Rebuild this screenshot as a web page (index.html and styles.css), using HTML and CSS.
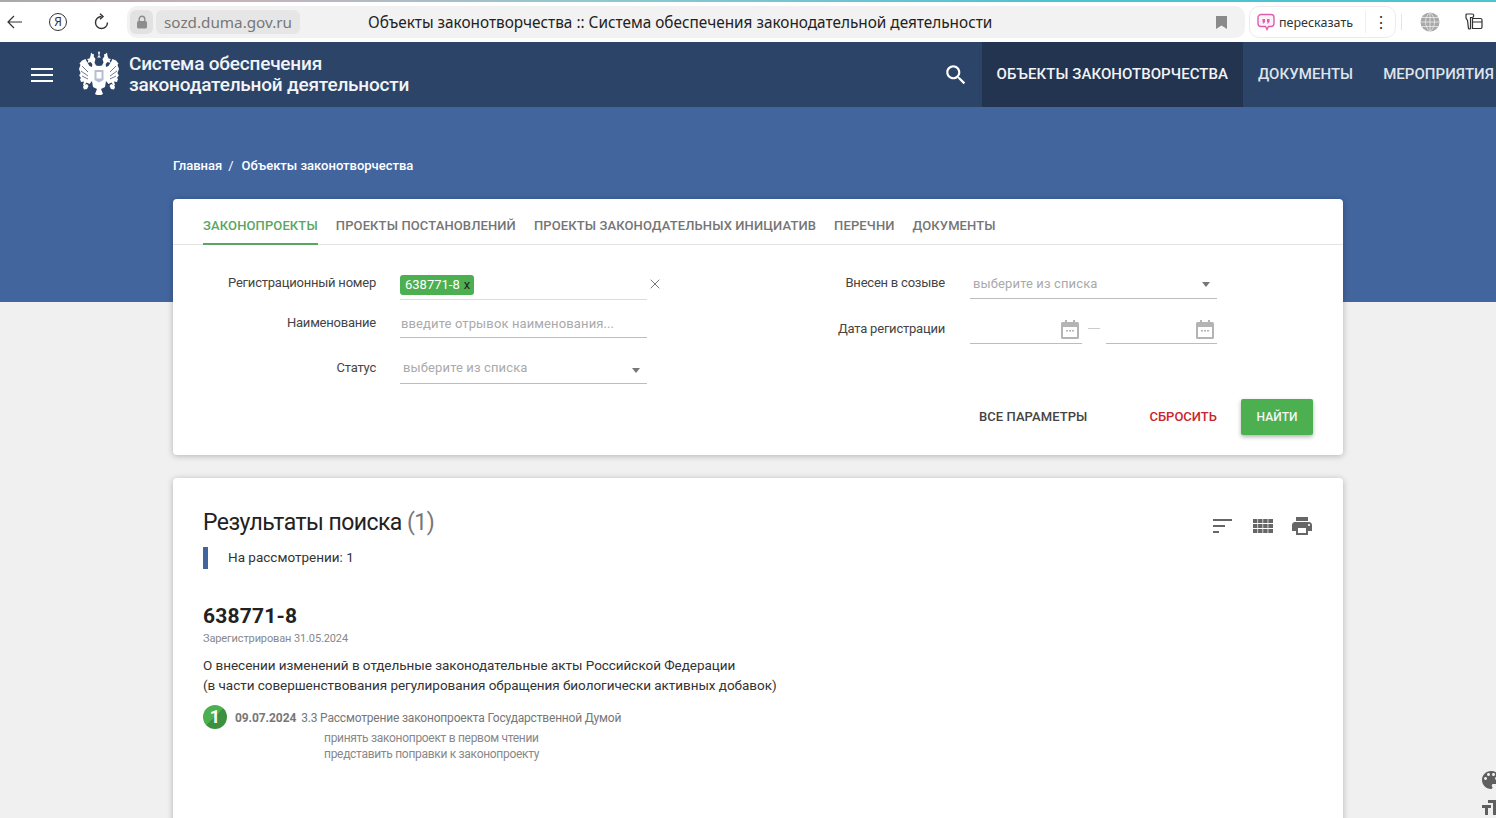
FILE: index.html
```html
<!DOCTYPE html>
<html lang="ru">
<head>
    <meta charset="utf-8">
    <title>Объекты законотворчества :: Система обеспечения законодательной деятельности</title>
    <link rel="stylesheet" href="styles.css">
</head>
<body>

<!-- browser toolbar -->
<div class="chrome">
    <div class="chrome-line"></div>
    <div class="chrome-row">
        <svg class="chrome-back" width="16" height="14" viewBox="0 0 16 14"><path d="M7 1 1 7l6 6M1 7h14" fill="none" stroke="#333" stroke-width="1.2"/></svg>
        <span class="ya-round">Я</span>
        <svg class="chrome-reload" width="18" height="18" viewBox="0 0 18 18"><path d="M9.5 3.500a6 6 0 1 0 6 6" fill="none" stroke="#333" stroke-width="1.4"/><path d="M8 .8l3 2.700-3 2.700" fill="none" stroke="#333" stroke-width="1.4"/></svg>
        <div class="address">
            <span class="lock-box">
                <svg width="12" height="14" viewBox="0 0 12 14"><rect x="1" y="6" width="10" height="7.5" rx="1.5" fill="#8d8d8d"/><path d="M3.200 6V4a2.800 2.800 0 0 1 5.600 0v2" fill="none" stroke="#8d8d8d" stroke-width="1.4"/></svg>
            </span>
            <span class="domain">sozd.duma.gov.ru</span>
            <span class="page-title">Объекты законотворчества :: Система обеспечения законодательной деятельности</span>
            <svg class="bookmark" width="11" height="13" viewBox="0 0 11 13"><path d="M0 0h11v13L5.500 9.500 0 13z" fill="#8a8a8a"/></svg>
        </div>
        <div class="retell">
            <svg width="18" height="18" viewBox="0 0 18 18"><path d="M4 1.500h10a3 3 0 0 1 3 3v6a3 3 0 0 1-3 3h-2.500l-1.500 3-1.500-3H4a3 3 0 0 1-3-3v-6a3 3 0 0 1 3-3z" fill="#fdf1f8" stroke="#e05cae" stroke-width="1.400"/><path d="M5.500 6h2.500v3l-1.500 1.500H5.500L6.300 9H5.500zM10 6h2.500v3L11 10.500h-1l.8-1.500H10z" fill="#e05cae"/></svg>
            <span class="retell-text">пересказать</span>
            <span class="retell-dots">⋮</span>
        </div>
        <span class="chrome-sep"></span>
        <svg class="globe" width="20" height="20" viewBox="0 0 20 20"><circle cx="10" cy="10" r="9.500" fill="#a8a8a8"/><path d="M.5 10h19M10 .5v19M2 5.500h16M2 14.500h16M10 .5c-6 5-6 14 0 19M10 .5c6 5 6 14 0 19" fill="none" stroke="#eee" stroke-width=".8"/></svg>
        <svg class="ext" width="18" height="18" viewBox="0 0 18 18"><path d="M2 1h5a1.500 1.500 0 0 1 0 3.500H5.500v11a1.500 1.500 0 0 1-2 0L2.500 7.500 1 5V2a1 1 0 0 1 1-1zM7.500 5.500h8a1.500 1.500 0 0 1 1.500 1.500v7a1.500 1.500 0 0 1-1.500 1.500h-8zM7.500 9h9.500" fill="none" stroke="#333" stroke-width="1.200"/></svg>
    </div>
</div>

<!-- site header -->
<header class="navbar">
    <div class="burger"><span></span><span></span><span></span></div>
    <svg class="emblem" width="40" height="44" viewBox="0 0 40 44">
        <defs>
            <g id="eagle-half">
                <path d="M20 0l1.200 2-.7.8v2.200l1.500 1.500h-2z"/>
                <path d="M12 1.500l1.500 1.500 1.500.2-.3 2.300 1.800 2.500-1 3.500 1.500 3 3 .5V44h-2l-2-1 2-5-4-2-1-6-2.500 3-3-1.500-2 3-1.500-.5 1-3.500-3 .5-1-3L2 27 .2 24.500 1.500 22 0 18l1.500-4-1-1.500L3 9.500l3.500-1.500L8 11l2.500 4 2.500 1 .3-3-1.800-2-3 1 .8-2.500-1.300-1.500 2.500-.5 1-2.500z"/>
                <path d="M5 34l3-1 1.500 2-1.500 3-3 .5-1-2.500z"/>
            </g>
        </defs>
        <g fill="#fff">
            <use href="#eagle-half"/>
            <use href="#eagle-half" transform="matrix(-1 0 0 1 40 0)"/>
        </g>
        <path d="M3 15l6 6M2 20l7 5M3 25l6 3" stroke="#2c4468" stroke-width=".7" fill="none"/>
        <path d="M37 15l-6 6M38 20l-7 5M37 25l-6 3" stroke="#2c4468" stroke-width=".7" fill="none"/>
        <path d="M15.500 19h9v10l-4.500 2.500-4.500-2.500z" fill="#b4bfd0"/>
        <path d="M17.500 21h5v6.500h-5z" fill="#fff"/>
    </svg>
    <div class="site-name">Система обеспечения<br>законодательной деятельности</div>
    <svg class="nav-search" width="26" height="26" viewBox="0 0 24 24"><path d="M15.500 14h-.79l-.28-.27C15.410 12.590 16 11.110 16 9.500 16 5.910 13.090 3 9.500 3S3 5.910 3 9.500 5.910 16 9.500 16c1.610 0 3.090-.59 4.230-1.570l.27.28v.79l5 4.990L20.490 19l-4.990-5zm-6 0C7.010 14 5 11.990 5 9.500S7.010 5 9.500 5 14 7.010 14 9.500 11.990 14 9.500 14z" fill="#fff"/></svg>
    <nav class="nav-items">
        <a class="nav-item active">Объекты законотворчества</a>
        <a class="nav-item">Документы</a>
        <a class="nav-item">Мероприятия</a>
    </nav>
</header>

<main class="content">
    <div class="breadcrumbs">
        <span>Главная</span><span class="crumb-sep">/</span><span>Объекты законотворчества</span>
    </div>

    <section class="card filter-card">
        <div class="tabs">
            <a class="tab active">Законопроекты</a>
            <a class="tab">Проекты постановлений</a>
            <a class="tab">Проекты законодательных инициатив</a>
            <a class="tab">Перечни</a>
            <a class="tab">Документы</a>
        </div>

        <div class="filter-form">
            <div class="form-col left-col">
                <div class="form-row row-number">
                    <label class="form-label">Регистрационный номер</label>
                    <div class="field field-light">
                        <span class="tag">638771-8<span class="tag-x">x</span></span>
                        <svg class="clear-x" width="10" height="10" viewBox="0 0 10 10"><path d="M.7.7l8.600 8.600M9.300.7 .7 9.300" stroke="#777" stroke-width="1"/></svg>
                    </div>
                </div>
                <div class="form-row row-name">
                    <label class="form-label">Наименование</label>
                    <div class="field"><span class="placeholder">введите отрывок наименования...</span></div>
                </div>
                <div class="form-row row-status">
                    <label class="form-label">Статус</label>
                    <div class="field field-select"><span class="placeholder">выберите из списка</span><span class="caret"></span></div>
                </div>
            </div>

            <div class="form-col right-col">
                <div class="form-row row-convocation">
                    <label class="form-label">Внесен в созыве</label>
                    <div class="field field-select"><span class="placeholder">выберите из списка</span><span class="caret"></span></div>
                </div>
                <div class="form-row row-date">
                    <label class="form-label">Дата регистрации</label>
                    <div class="date-range">
                        <div class="field date-field date-from">
                            <svg class="cal" width="18" height="19" viewBox="0 0 18 19"><path d="M4 0h2v2h6V0h2v2h2.500A1.500 1.500 0 0 1 18 3.500v14a1.500 1.500 0 0 1-1.500 1.500h-15A1.500 1.500 0 0 1 0 17.500v-14A1.500 1.500 0 0 1 1.500 2H4zM2 7v10h14V7z" fill="#b4b4b4"/><path d="M5 10h2v1.500H5zM8 10h2v1.500H8zM11 10h2v1.500h-2z" fill="#b4b4b4"/></svg>
                        </div>
                        <span class="date-dash"></span>
                        <div class="field date-field date-to">
                            <svg class="cal" width="18" height="19" viewBox="0 0 18 19"><path d="M4 0h2v2h6V0h2v2h2.500A1.500 1.500 0 0 1 18 3.500v14a1.500 1.500 0 0 1-1.500 1.500h-15A1.500 1.500 0 0 1 0 17.500v-14A1.500 1.500 0 0 1 1.500 2H4zM2 7v10h14V7z" fill="#b4b4b4"/><path d="M5 10h2v1.500H5zM8 10h2v1.500H8zM11 10h2v1.500h-2z" fill="#b4b4b4"/></svg>
                        </div>
                    </div>
                </div>
            </div>
        </div>

        <div class="form-actions">
            <button class="btn-flat">Все параметры</button>
            <button class="btn-flat btn-reset">Сбросить</button>
            <button class="btn-find">Найти</button>
        </div>
    </section>

    <section class="card results-card">
        <div class="results-head">
            <h2 class="results-title">Результаты поиска <span class="results-count">(1)</span></h2>
            <div class="results-tools">
                <svg width="24" height="24" viewBox="0 0 24 24"><path d="M2 5h19v2H2zM2 11h12v2H2zM2 17h6v2H2z" fill="#666"/></svg>
                <svg class="tool-grid" width="20" height="14" viewBox="0 0 20 14"><path d="M0 0h4.400v4H0zM5.100 0h4.400v4H5.100zM10.200 0h4.400v4h-4.400zM15.300 0H20v4h-4.700zM0 5h4.400v4H0zM5.100 5h4.400v4H5.100zM10.200 5h4.400v4h-4.400zM15.300 5H20v4h-4.700zM0 10h4.400v4H0zM5.100 10h4.400v4H5.100zM10.200 10h4.400v4h-4.400zM15.300 10H20v4h-4.700z" fill="#666"/></svg>
                <svg width="24" height="24" viewBox="0 0 24 24"><path d="M19 8H5c-1.660 0-3 1.340-3 3v6h4v4h12v-4h4v-6c0-1.660-1.340-3-3-3zm-3 11H8v-5h8v5zm3-7c-.55 0-1-.45-1-1s.45-1 1-1 1 .45 1 1-.45 1-1 1zm-1-9H6v4h12V3z" fill="#666"/></svg>
            </div>
        </div>
        <div class="status-line">На рассмотрении: 1</div>

        <article class="bill">
            <div class="bill-number">638771-8</div>
            <div class="bill-date">Зарегистрирован 31.05.2024</div>
            <p class="bill-name">О внесении изменений в отдельные законодательные акты Российской Федерации<br>(в части совершенствования регулирования обращения биологически активных добавок)</p>
            <div class="bill-event">
                <span class="event-badge">1</span>
                <span class="event-date">09.07.2024</span>
                <span class="event-text">3.3 Рассмотрение законопроекта Государственной Думой</span>
            </div>
            <div class="event-notes">принять законопроект в первом чтении<br>представить поправки к законопроекту</div>
        </article>
    </section>
</main>

<!-- floating display tools, clipped by the window edge -->
<div class="side-tools">
    <svg width="24" height="24" viewBox="0 0 24 24"><path d="M12 3c-4.970 0-9 4.030-9 9s4.030 9 9 9c.83 0 1.500-.67 1.500-1.500 0-.39-.15-.74-.39-1.010-.23-.26-.38-.61-.38-.99 0-.83.67-1.500 1.500-1.500H16c2.760 0 5-2.240 5-5 0-4.420-4.030-8-9-8zm-5.500 9c-.83 0-1.500-.67-1.500-1.500S5.670 9 6.500 9 8 9.670 8 10.500 7.330 12 6.500 12zm3-4C8.670 8 8 7.330 8 6.500S8.670 5 9.500 5s1.500.67 1.500 1.500S10.330 8 9.500 8zm5 0c-.83 0-1.500-.67-1.500-1.500S13.670 5 14.500 5s1.500.67 1.500 1.500S15.330 8 14.500 8zm3 4c-.83 0-1.500-.67-1.500-1.500S16.670 9 17.500 9s1.500.67 1.500 1.500-.67 1.500-1.500 1.500z" fill="#5f5f5f"/></svg>
    <svg width="24" height="24" viewBox="0 0 24 24"><path d="M9 4v3h5v12h3V7h5V4H9zm-6 8h3v7h3v-7h3V9H3v3z" fill="#5f5f5f"/></svg>
</div>

</body>
</html>
```

FILE: styles.css
```css
html, body {
    margin: 0;
    padding: 0;
    height: 818px;
    overflow: hidden;
}
body {
    font-family: Roboto, "Liberation Sans", sans-serif;
    background-color: #f0f0f0;
    color: #333;
    position: relative;
}

/* browser toolbar */
.chrome {
    height: 42px;
    background: #fff;
}
.chrome-line {
    height: 2px;
    background: linear-gradient(90deg, #a9a9a9 0, #c9b2bb 15%, #8fc8d2 40%, #4fc2cf 70%, #4fc2cf 100%);
}
.chrome-row {
    height: 40px;
    display: flex;
    align-items: center;
}
.chrome-back {
    margin-left: 7px;
}
.ya-round {
    width: 16px;
    height: 16px;
    margin-left: 26px;
    border: 1.2px solid #333;
    border-radius: 50%;
    font: 12px/16px "Noto Sans", sans-serif;
    text-align: center;
    color: #333;
}
.chrome-reload {
    margin-left: 25px;
}
.address {
    width: 1118px;
    height: 32px;
    margin-left: 17px;
    display: flex;
    align-items: center;
    background: #f2f2f2;
    border-radius: 10px;
}
.lock-box {
    width: 23px;
    height: 24px;
    margin-left: 3px;
    display: flex;
    align-items: center;
    justify-content: center;
    background: #e2e2e2;
    border-radius: 6px;
}
.domain {
    margin-left: 3px;
    padding: 0 8px;
    height: 24px;
    background: #e6e6e6;
    border-radius: 6px;
    font: 15.250px/24px "Noto Sans", sans-serif;
    color: #777;
}
.page-title {
    margin-left: 68px;
    font: 15.350px "Noto Sans", sans-serif;
    color: #222;
    white-space: nowrap;
}
.bookmark {
    margin-left: auto;
    margin-right: 18px;
}
.retell {
    width: 145px;
    height: 30px;
    margin-left: 4px;
    display: flex;
    align-items: center;
    border: 1px solid #ececec;
    border-radius: 10px;
}
.retell svg {
    margin-left: 7px;
}
.retell-text {
    margin-left: 4px;
    font: 12.500px "Noto Sans", sans-serif;
    color: #333;
}
.retell-dots {
    margin-left: 12px;
    padding-left: 7px;
    border-left: 1px solid #eee;
    font: 16px "Noto Sans", sans-serif;
    color: #333;
}
.chrome-sep {
    width: 1px;
    height: 16px;
    margin-left: 5px;
    background: #e4e4e4;
}
.globe {
    margin-left: 18px;
}
.ext {
    margin-left: 25px;
}

/* site header */
.navbar {
    height: 65px;
    display: flex;
    align-items: center;
    background: #2c4468;
    color: #fff;
    white-space: nowrap;
}
.burger {
    width: 22px;
    margin-left: 31px;
    display: flex;
    flex-direction: column;
    gap: 4px;
}
.burger span {
    height: 2px;
    background: #fff;
}
.emblem {
    margin-left: 26px;
    margin-top: -3px;
}
.site-name {
    margin-left: 10px;
    margin-bottom: 2px;
    font-size: 19px;
    font-weight: 500;
    line-height: 21px;
    letter-spacing: -.2px;
    color: #f2f4f7;
}
.nav-search {
    margin-left: auto;
}
.nav-items {
    height: 65px;
    margin-left: 13px;
    margin-right: -13px;
    display: flex;
}
.nav-item {
    display: flex;
    align-items: center;
    padding: 0 15px 2px;
    font-size: 15px;
    font-weight: 500;
    letter-spacing: .05px;
    text-transform: uppercase;
    color: #dfe4ec;
}
.nav-item.active {
    background: #233450;
    color: #f2f4f7;
}

/* page body with the blue band behind the top of the filter */
.content {
    height: 711px;
    overflow: hidden;
    padding: 0 153px 0 173px;
    background: linear-gradient(#42659e 0, #42659e 195px, #f0f0f0 195px);
}
.breadcrumbs {
    height: 92px;
    box-sizing: border-box;
    padding-top: 51px;
    font-size: 13px;
    font-weight: 500;
    line-height: 16px;
    color: #fff;
}
.crumb-sep {
    margin: 0 8px 0 6px;
    font-weight: 400;
}
.card {
    background: #fff;
    border-radius: 4px;
    box-shadow: 0 1px 6px rgba(0,0,0,0.25);
}

/* filter card */
.filter-card {
    height: 256px;
}
.tabs {
    height: 46px;
    box-sizing: border-box;
    padding: 0 30px;
    display: flex;
    gap: 18px;
    border-bottom: 1px solid #e4e4e4;
}
.tab {
    height: 46px;
    box-sizing: border-box;
    padding-top: 19px;
    font-size: 13px;
    font-weight: 500;
    line-height: 16px;
    letter-spacing: .12px;
    text-transform: uppercase;
    color: #757575;
}
.tab.active {
    color: #5aa661;
    border-bottom: 2px solid #5aa661;
}
.filter-form {
    display: flex;
    height: 154px;
}
.form-col {
    display: flex;
    flex-direction: column;
}
.left-col {
    width: 474px;
}
.right-col {
    margin-left: 144px;
}
.form-row {
    flex: none;
    display: flex;
    gap: 24px;
}
.left-col .form-label {
    width: 203px;
}
.right-col .form-row {
    gap: 25px;
}
.right-col .form-label {
    width: 154px;
}
.form-label {
    padding-top: 1px;
    font-size: 13px;
    line-height: 16px;
    letter-spacing: -.22px;
    text-align: right;
    color: #444;
}
.field {
    position: relative;
    width: 247px;
    box-sizing: border-box;
    border-bottom: 1px solid #bdbdbd;
}
.field-light {
    border-bottom-color: #dcdcdc;
}
.placeholder {
    display: block;
    padding-top: 1px;
    font-size: 13px;
    line-height: 16px;
    letter-spacing: .12px;
    color: #aaa;
}
.row-number {
    margin-top: 30px;
    height: 25px;
}
.row-number .form-label {
    margin-top: -1px;
}
.row-name {
    margin-top: 14px;
    height: 24px;
}
.row-status {
    margin-top: 21px;
    height: 25px;
}
.row-name .field {
    padding-top: 1px;
    padding-left: 1px;
}
.row-status .field {
    padding-left: 3px;
}
.tag {
    display: inline-block;
    height: 20px;
    padding: 0 4px 0 5px;
    border-radius: 3px;
    background: #4caf50;
    font-size: 13px;
    line-height: 20px;
    color: #fff;
    vertical-align: top;
}
.tag-x {
    margin-left: 4px;
    color: #222;
}
.clear-x {
    position: absolute;
    right: -13px;
    top: 4px;
}
.caret {
    position: absolute;
    right: 7px;
    top: 9px;
    border-left: 4px solid transparent;
    border-right: 4px solid transparent;
    border-top: 5px solid #777;
}
.row-convocation {
    margin-top: 29px;
    height: 25px;
}
.right-col .field-select {
    padding-left: 3px;
    padding-top: 1px;
}
.right-col .field-select .caret {
    top: 8px;
}
.row-date {
    margin-top: 20px;
    height: 25px;
}
.row-date .form-label {
    padding-top: 2px;
}
.date-range {
    width: 247px;
    display: flex;
    align-items: stretch;
}
.date-from {
    width: 112px;
}
.date-to {
    width: 111px;
}
.date-dash {
    width: 12px;
    height: 1px;
    margin: 9px 6px 0;
    background: #ccc;
}
.cal {
    position: absolute;
    right: 3px;
    top: 1px;
}
.form-actions {
    height: 36px;
    padding-right: 30px;
    display: flex;
    justify-content: flex-end;
    align-items: center;
}
.form-actions button {
    font-family: inherit;
    font-size: 13px;
    font-weight: 500;
    text-transform: uppercase;
    border: none;
    cursor: pointer;
}
.btn-flat {
    margin-bottom: 2px;
    padding: 0;
    background: none;
    letter-spacing: .08px;
    color: #444;
}
.btn-reset {
    margin-left: 62px;
    letter-spacing: 0;
    color: #c9252d;
}
.form-actions .btn-find {
    width: 72px;
    height: 36px;
    margin-left: 24px;
    padding: 0;
    border-radius: 2px;
    background: #4caf50;
    font-size: 12px;
    color: #f4f8f4;
    box-shadow: 0 2px 4px rgba(0,0,0,0.3);
}

/* search results */
.results-card {
    margin-top: 23px;
    height: 400px;
    padding: 30px 30px 0;
}
.results-head {
    display: flex;
    justify-content: space-between;
}
.results-title {
    margin: 0;
    padding-top: 1px;
    font-size: 23px;
    font-weight: 400;
    line-height: 28px;
    letter-spacing: -.55px;
    color: #222;
}
.results-count {
    color: #777;
}
.results-tools {
    margin-top: 6px;
    margin-right: -1px;
    display: flex;
    align-items: center;
    gap: 18px;
}
.tool-grid {
    margin-right: -1px;
}
.status-line {
    height: 22px;
    margin-top: 9px;
    padding-left: 20px;
    border-left: 5px solid #42659e;
    font-size: 13.500px;
    line-height: 20px;
    color: #333;
}
.bill {
    margin-top: 33px;
}
.bill-number {
    font-size: 21px;
    font-weight: 700;
    line-height: 28px;
    letter-spacing: .2px;
    color: #222;
}
.bill-date {
    margin-top: 2px;
    font-size: 11px;
    line-height: 14px;
    letter-spacing: -.12px;
    color: #888;
}
.bill-name {
    margin: 9px 0 0;
    font-size: 13.500px;
    line-height: 20px;
    letter-spacing: -.04px;
    color: #333;
}
.bill-event {
    height: 24px;
    margin-top: 10px;
    display: flex;
    align-items: center;
    font-size: 12px;
    line-height: 24px;
    color: #777;
}
.event-badge {
    width: 24px;
    height: 24px;
    border-radius: 50%;
    background: linear-gradient(135deg, #4caf50 50%, #3b9140 50%);
    color: #fff;
    font-size: 18px;
    font-weight: 700;
    line-height: 24px;
    text-align: center;
}
.event-date {
    margin-left: 8px;
    padding-top: 2px;
    font-weight: 700;
    letter-spacing: -.08px;
}
.event-text {
    margin-left: 5px;
    padding-top: 2px;
    letter-spacing: -.19px;
}
.event-notes {
    margin: 1px 0 0 121px;
    font-size: 12px;
    line-height: 16px;
    letter-spacing: -.3px;
    color: #888;
}

/* floating tools over the right edge */
.side-tools {
    position: absolute;
    left: 1479px;
    top: 768px;
    display: flex;
    flex-direction: column;
    gap: 4px;
}
```
